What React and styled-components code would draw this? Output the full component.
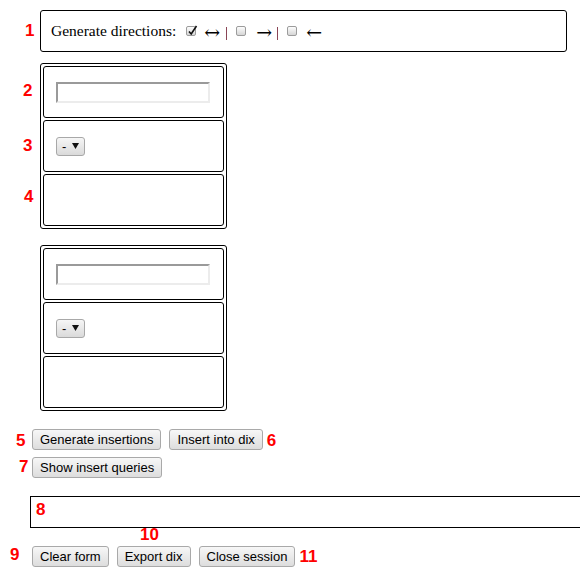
import React from 'react'
import styled, { createGlobalStyle } from 'styled-components'

const GlobalStyle = createGlobalStyle`
  html, body {
    margin: 0;
    padding: 0;
    overflow: hidden;
    background: #fff;
  }
  body {
    font-family: "Liberation Serif", "Times New Roman", serif;
  }
`;

const Page = styled.div`
  width: 580px;
  height: 575px;
  padding-top: 10px;
  box-sizing: border-box;
  display: flex;
  flex-direction: column;
`;

const Row = styled.div`
  display: flex;
  align-items: ${({ $center }) => ($center ? 'center' : 'flex-start')};
  margin-top: ${({ $mt }) => $mt || 0}px;
`;

// red annotation digits
const Num = styled.span`
  display: block;
  flex-shrink: 0;
  box-sizing: border-box;
  width: ${({ $w }) => ($w ? `${$w}px` : 'auto')};
  padding-left: ${({ $pad }) => $pad || 0}px;
  margin-left: ${({ $ml }) => $ml || 0}px;
  margin-top: ${({ $dy }) => $dy || 0}px;
  font-family: "Liberation Sans", Arial, sans-serif;
  font-weight: bold;
  font-size: 17px;
  line-height: 20px;
  color: #ff0000;
`;

const DirBox = styled.div`
  width: 527px;
  height: 42px;
  box-sizing: border-box;
  border: 1px solid #000;
  border-radius: 3px;
  padding: 0 10px;
  display: flex;
  align-items: center;
  font-size: 15.5px;
  line-height: 20px;
`;

const Check = styled.span`
  position: relative;
  display: inline-block;
  flex-shrink: 0;
  width: 10px;
  height: 10px;
  box-sizing: border-box;
  margin-left: ${({ $ml }) => $ml}px;
  border: 1px solid #9c9c9c;
  border-radius: 2px;
  background: linear-gradient(#fdfdfd, #d6d6d6);

  svg {
    position: absolute;
    left: 0;
    top: -3px;
  }
`;

const Arrow = styled.span`
  display: inline-block;
  width: 16px;
  margin-left: ${({ $ml }) => $ml}px;
  margin-top: 1px;
  text-align: center;
  font-family: "DejaVu Serif", serif;
  font-size: 19px;
  line-height: 20px;
  color: #000;
`;

const Sep = styled.span`
  display: inline-block;
  width: 1px;
  height: 13px;
  margin-left: ${({ $ml }) => $ml}px;
  margin-top: 4px;
  background: #8a4556;
`;

const LabelCol = styled.div`
  width: 40px;
  flex-shrink: 0;
  padding-top: 3px;
  display: flex;
  flex-direction: column;
  gap: 2px;
`;

const LabelCell = styled.div`
  height: 52px;
`;

const Grid = styled.div`
  width: 187px;
  box-sizing: border-box;
  border: 1px solid #000;
  border-radius: 3px;
  padding: 2px;
  display: flex;
  flex-direction: column;
  gap: 2px;
  margin-left: ${({ $ml }) => $ml || 0}px;
`;

const Cell = styled.div`
  height: 52px;
  box-sizing: border-box;
  border: 1px solid #000;
  border-radius: 3px;
  padding-left: 12px;
  display: flex;
  align-items: center;
`;

const TextInput = styled.input`
  display: block;
  width: 154px;
  height: 21px;
  box-sizing: border-box;
  padding: 0;
  border: 2px solid;
  border-color: #9a9a9a #ececec #ececec #9a9a9a;
  background: #fff;
  outline: none;
`;

const Select = styled.span`
  display: flex;
  align-items: center;
  width: 29px;
  height: 19px;
  box-sizing: border-box;
  padding-left: 5px;
  border: 1px solid #a8a8a8;
  border-radius: 3px;
  background: linear-gradient(#f6f6f6, #dadada);
  font: 13px "Liberation Sans", Arial, sans-serif;
  color: #000;

  svg {
    margin-left: 6px;
  }
`;

const Btn = styled.button`
  flex-shrink: 0;
  height: 21px;
  padding: 0 7px;
  border: 1px solid #a9a9a9;
  border-radius: 3px;
  background: linear-gradient(#f7f7f7, #dddddd);
  font: 13px "Liberation Sans", Arial, sans-serif;
  color: #000;
  white-space: nowrap;
`;

const Buttons = styled.div`
  display: flex;
  gap: 8px;
`;

const OutBox = styled.div`
  margin: 18px 0 0 30px;
  width: 600px;
  height: 32px;
  box-sizing: border-box;
  border: 1px solid #000;
  padding: 3px 0 0 5px;
`;

const Caption = styled(Num)`
  line-height: 18px;
  margin-top: -2px;
`;

const Checkmark = () => (
  <svg width="12" height="12" viewBox="0 0 12 12">
    <path d="M2 7.5 L4.2 10 L9.5 2" fill="none" stroke="#111" strokeWidth="1.6" />
  </svg>
);

const Caret = () => (
  <svg width="7" height="6" viewBox="0 0 7 6">
    <path d="M0 0 H7 L3.5 6 Z" fill="#111" />
  </svg>
);

const EntryTable = ({ ml }) => (
  <Grid $ml={ml}>
    <Cell>
      <TextInput type="text" />
    </Cell>
    <Cell>
      <Select>
        -<Caret />
      </Select>
    </Cell>
    <Cell />
  </Grid>
);

const App = () => {
  return (
    <Page>
      <GlobalStyle />

      {/* directions */}
      <Row $center>
        <Num $w={40} $pad={25}>1</Num>
        <DirBox>
          <span>Generate directions:</span>
          <Check $ml={10}><Checkmark /></Check>
          <Arrow $ml={8}>↔</Arrow>
          <Sep $ml={6} />
          <Check $ml={9} />
          <Arrow $ml={10}>→</Arrow>
          <Sep $ml={5} />
          <Check $ml={9} />
          <Arrow $ml={9}>←</Arrow>
        </DirBox>
      </Row>

      {/* first entry table */}
      <Row $mt={11}>
        <LabelCol>
          <LabelCell><Num $pad={23} $dy={14.5}>2</Num></LabelCell>
          <LabelCell><Num $pad={23} $dy={15.5}>3</Num></LabelCell>
          <LabelCell><Num $pad={24} $dy={12.5}>4</Num></LabelCell>
        </LabelCol>
        <EntryTable />
      </Row>

      {/* second entry table */}
      <Row $mt={16}>
        <EntryTable ml={40} />
      </Row>

      <Row $mt={18}>
        <Num $w={32} $pad={16} $dy={1.5}>5</Num>
        <Buttons>
          <Btn>Generate insertions</Btn>
          <Btn>Insert into dix</Btn>
        </Buttons>
        <Num $ml={4} $dy={1.5}>6</Num>
      </Row>

      <Row $mt={6}>
        <Num $w={32} $pad={19} $dy={0.5}>7</Num>
        <Btn>Show insert queries</Btn>
      </Row>

      <OutBox>
        <Num>8</Num>
      </OutBox>

      <Caption $ml={140}>10</Caption>

      <Row $mt={2}>
        <Num $w={32} $pad={10} $dy={-1}>9</Num>
        <Buttons>
          <Btn>Clear form</Btn>
          <Btn>Export dix</Btn>
          <Btn>Close session</Btn>
        </Buttons>
        <Num $ml={4} $dy={1.5}>11</Num>
      </Row>
    </Page>
  )
}

export default App;
